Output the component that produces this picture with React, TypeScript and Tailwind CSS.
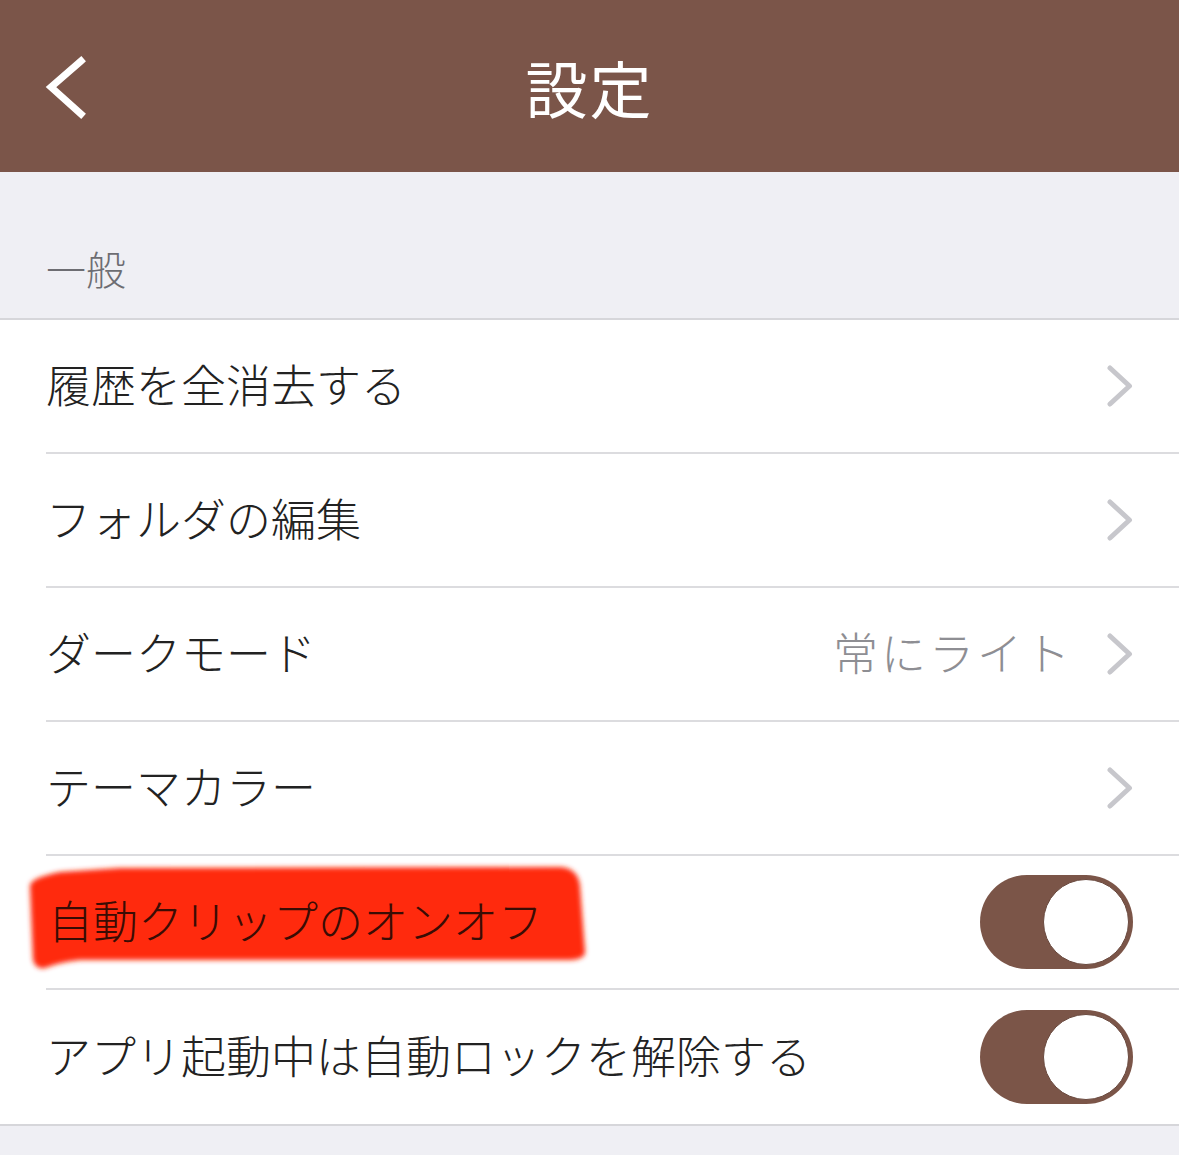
import React from "react";

const FONT = '"Noto Sans CJK JP", "Noto Sans", sans-serif';

function Chevron() {
  return (
    <svg width="32" height="42" viewBox="0 0 32 42" className="shrink-0">
      <path d="M9 3 L28.5 21 L9 39" fill="none" stroke="#c7c7cc" strokeWidth="5" strokeLinecap="round" strokeLinejoin="round" />
    </svg>
  );
}

function Toggle() {
  return (
    <div className="w-[153px] h-[94px] rounded-full bg-[#7b5548] flex items-center justify-end pr-[4px] shrink-0">
      <div className="w-[86px] h-[86px] rounded-full bg-white border border-[#6a4a3f]" />
    </div>
  );
}

function Row({ children, right, last }: { children: React.ReactNode; right?: React.ReactNode; last?: boolean }) {
  return (
    <div className={"relative h-[134px] " + (last ? "" : "pl-[46px]")}>
      <div className={"h-full flex items-center justify-between pr-[46px] " + (last ? "pl-[46px]" : "border-b-2 border-[#dcdcdf]")}>
        {children}
        {right}
      </div>
    </div>
  );
}

export default function App() {
  return (
    <div className="w-[1179px] h-[1155px] bg-[#efeff4] overflow-hidden" style={{ fontFamily: FONT }}>
      <div className="h-[172px] bg-[#7b5549] relative flex items-center justify-center">
        <svg width="60" height="80" viewBox="0 0 60 80" className="absolute left-[30px] top-[48px]">
          <path d="M51 13 L21 39 L51 66" fill="none" stroke="white" strokeWidth="7" strokeLinecap="square" />
        </svg>
        <span className="text-white text-[62px] leading-none tracking-[2px] mt-[2px]">設定</span>
      </div>
      <div className="h-[146px] flex items-end pl-[46px] pb-[30px]">
        <span className="text-[#6d6d72] text-[40px] leading-none font-light">一般</span>
      </div>
      <div className="bg-white border-t-2 border-b-2 border-[#d6d6da]">
        <Row right={<Chevron />}>
          <span className="text-[45px] leading-none text-[#222] font-light -mt-[6px]">履歴を全消去する</span>
        </Row>
        <Row right={<Chevron />}>
          <span className="text-[45px] leading-none text-[#222] font-light -mt-[6px]">フォルダの編集</span>
        </Row>
        <Row
          right={
            <div className="flex items-center gap-[28px]">
              <span className="text-[45px] leading-none text-[#8e8e93] font-light tracking-[3px] -mt-[6px]">常にライト</span>
              <Chevron />
            </div>
          }
        >
          <span className="text-[45px] leading-none text-[#222] font-light -mt-[6px]">ダークモード</span>
        </Row>
        <Row right={<Chevron />}>
          <span className="text-[45px] leading-none text-[#222] font-light -mt-[6px]">テーマカラー</span>
        </Row>
        <div className="relative">
          <svg width="600" height="130" viewBox="0 0 600 130" className="absolute left-0 top-0 pointer-events-none">
            <defs>
              <filter id="blur" x="-10%" y="-20%" width="120%" height="140%">
                <feGaussianBlur stdDeviation="2.5" />
              </filter>
            </defs>
            <path
              d="M30 30 Q30 22 60 16 L120 12 L560 11 Q578 12 580 30 L585 95 Q586 103 570 104 L80 104 Q60 106 45 112 Q36 114 33 104 Z"
              fill="#ff2a0c"
              filter="url(#blur)"
            />
          </svg>
          <Row right={<Toggle />}>
            <span className="relative text-[45px] leading-none text-[#3a0c04] font-light pl-[2px] -mt-[6px]">自動クリップのオンオフ</span>
          </Row>
        </div>
        <Row right={<Toggle />} last>
          <span className="text-[45px] leading-none text-[#222] font-light -mt-[6px]">アプリ起動中は自動ロックを解除する</span>
        </Row>
      </div>
    </div>
  );
}
